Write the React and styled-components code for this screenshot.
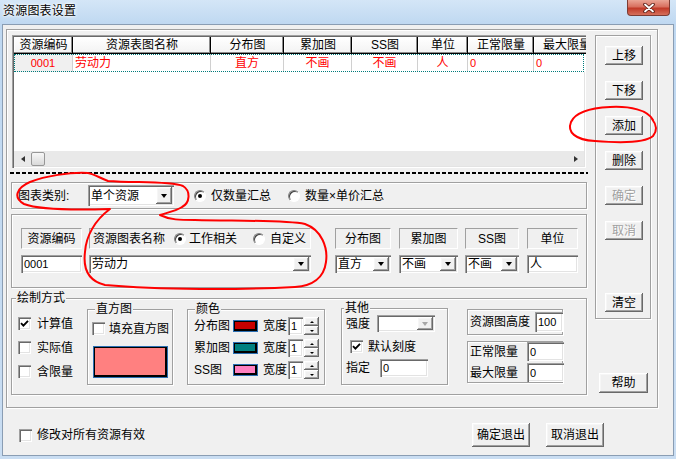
import React from 'react';
import styled, { createGlobalStyle, css } from 'styled-components';

const FONT = `"Liberation Sans", "Noto Sans CJK SC", sans-serif`;

const Global = createGlobalStyle`
  html, body { margin: 0; padding: 0; background: #fff; }
  body { font-family: ${FONT}; font-size: 12px; }
  * { box-sizing: border-box; }
`;

const raised = css`
  box-shadow: inset -1px -1px #696969, inset 1px 1px #fff, inset -2px -2px #a0a0a0, inset 2px 2px #f6f6f6;
`;
const sunken = css`
  box-shadow: inset 1px 1px #a0a0a0, inset 2px 2px #696969, inset -1px -1px #fff, inset -2px -2px #e3e3e3;
`;
const etched = css`
  border: 1px solid #a0a0a0;
  box-shadow: inset 1px 1px #fff, 1px 1px #fff;
`;

const Window = styled.div`
  position: relative;
  width: 676px;
  height: 459px;
  overflow: hidden;
  background: linear-gradient(180deg, #d4e6f7 0px, #bfd8f1 24px, #c9ddf2 100%);
  display: flex;
  flex-direction: column;
  font-family: ${FONT};
  font-size: 12px;
  line-height: 14px;
  color: #000;
`;

const TitleBar = styled.div`
  height: 24px;
  flex-shrink: 0;
  display: flex;
  align-items: flex-start;
  padding-left: 3px;
`;

const TitleText = styled.div`
  margin-top: 4px;
  letter-spacing: 0.2px;
  text-shadow: 0 0 5px #fff, 0 0 3px #fff, 0 0 2px #fff;
`;

const CloseBtn = styled.div`
  margin-left: auto;
  margin-right: 6px;
  width: 43px;
  height: 16px;
  border: 1px solid #7d3c33;
  border-top: none;
  border-radius: 0 0 4px 4px;
  background: linear-gradient(180deg, #eaa595 0%, #d8705f 45%, #c13a28 55%, #d5705c 100%);
  display: flex;
  align-items: center;
  justify-content: center;
`;

const Client = styled.div`
  flex: 1;
  margin: 0 2px 3px 2px;
  background: #f0f0f0;
  border: 1px solid #8a9db3;
  display: flex;
  flex-direction: column;
`;

const OuterFrame = styled.div`
  margin: 4px 0 0 3px;
  width: 652px;
  height: 379px;
  flex-shrink: 0;
  ${etched};
  display: flex;
  gap: 8px;
  padding: 5px 0 0 4px;
`;

const LeftCol = styled.div`
  width: 576px;
  display: flex;
  flex-direction: column;
`;

const RightCol = styled.div`
  width: 56px;
  display: flex;
  flex-direction: column;
`;

const ButtonPanel = styled.div`
  height: 284px;
  ${etched};
  display: flex;
  flex-direction: column;
  gap: 16px;
  padding: 10px 0 6px 9px;
`;

const Btn = styled.div`
  width: ${p => p.$w}px;
  height: ${p => p.$h}px;
  flex-shrink: 0;
  background: #f0f0f0;
  ${raised};
  display: flex;
  align-items: center;
  justify-content: center;
  color: ${p => (p.$disabled ? '#a0a0a0' : '#000')};
  text-shadow: ${p => (p.$disabled ? '1px 1px #fff' : 'none')};
  margin-top: ${p => (p.$push ? 'auto' : `${p.$mt || 0}px`)};
  margin-left: ${p => p.$ml || 0}px;
`;

/* ---------- list view ---------- */
const ListView = styled.div`
  margin-left: 1px;
  width: 574px;
  height: 133px;
  flex-shrink: 0;
  background: #fff;
  ${sunken};
  padding: 2px;
  display: flex;
  flex-direction: column;
  overflow: hidden;
`;

const HeaderRow = styled.div`
  display: flex;
  height: 17px;
  flex-shrink: 0;
`;

const HeaderCell = styled.div`
  width: ${p => p.$w}px;
  flex-shrink: 0;
  background: linear-gradient(180deg, #ffffff, #f2f2f2);
  box-shadow: inset -1px -1px #000, inset -2px -2px #8c8c8c, inset 1px 1px #fff;
  display: flex;
  align-items: center;
  justify-content: center;
  padding-bottom: 1px;
  white-space: nowrap;
  overflow: hidden;
`;

const DataRow = styled.div`
  display: flex;
  height: 18px;
  flex-shrink: 0;
  outline: 1px dotted #007b7b;
  outline-offset: -1px;
`;

const DataCell = styled.div`
  width: ${p => p.$w}px;
  flex-shrink: 0;
  border-right: 1px solid #d0d0d0;
  background: ${p => (p.$first ? '#f0f0f0' : '#fff')};
  color: #f00;
  display: flex;
  align-items: center;
  justify-content: ${p => (p.$align === 'left' ? 'flex-start' : 'center')};
  padding-left: ${p => (p.$align === 'left' ? 2 : 0)}px;
  font-size: ${p => (p.$num ? 11 : 12)}px;
  white-space: nowrap;
  overflow: hidden;
`;

const HScroll = styled.div`
  margin-top: auto;
  height: 15px;
  flex-shrink: 0;
  background: #e9e9e9;
  display: flex;
  align-items: center;
`;

const ScrollArrow = styled.div`
  width: 17px;
  height: 15px;
  display: flex;
  align-items: center;
  justify-content: center;
  margin-left: ${p => (p.$right ? 'auto' : '0')};
  &::after {
    content: '';
    border-top: 3.5px solid transparent;
    border-bottom: 3.5px solid transparent;
    ${p => (p.$right ? 'border-left: 4px solid #333;' : 'border-right: 4px solid #333;')}
  }
`;

const Thumb = styled.div`
  width: 14px;
  height: 14px;
  border: 1px solid #979797;
  border-radius: 2px;
  background: linear-gradient(180deg, #f7f7f7, #d9d9d9);
`;

const DashedLine = styled.div`
  margin: 4px 0 0 -1px;
  width: 578px;
  height: 2px;
  flex-shrink: 0;
  background: repeating-linear-gradient(90deg, #000 0 4px, transparent 4px 6px);
`;

/* ---------- form controls ---------- */
const ComboBox = styled.div`
  width: ${p => p.$w}px;
  height: ${p => p.$h || 18}px;
  flex-shrink: 0;
  background: #fff;
  ${sunken};
  display: flex;
  align-items: stretch;
  padding: 2px;
`;

const ComboText = styled.div`
  flex: 1;
  padding-left: 1px;
  display: flex;
  align-items: center;
  white-space: nowrap;
  overflow: hidden;
`;

const ComboArrow = styled.div`
  width: 16px;
  flex-shrink: 0;
  background: #f0f0f0;
  ${raised};
  display: flex;
  align-items: center;
  justify-content: center;
  &::after {
    content: '';
    border-left: 3.5px solid transparent;
    border-right: 3.5px solid transparent;
    border-top: 4px solid ${p => (p.$disabled ? '#a6a6a6' : '#000')};
  }
`;

const TextBox = styled.div`
  width: ${p => p.$w}px;
  height: ${p => p.$h || 18}px;
  flex-shrink: 0;
  background: #fff;
  ${sunken};
  padding: 0 2px 0 3px;
  display: flex;
  align-items: center;
  font-size: ${p => (p.$num ? 11 : 12)}px;
  white-space: nowrap;
  overflow: hidden;
`;

const CheckBox = styled.div`
  width: 13px;
  height: 13px;
  flex-shrink: 0;
  background: #fff;
  ${sunken};
  display: flex;
  align-items: center;
  justify-content: center;
  margin-left: ${p => p.$ml || 0}px;
`;

const CheckItem = styled.div`
  display: flex;
  align-items: center;
  gap: ${p => p.$gap || 6}px;
  margin-top: ${p => p.$mt || 0}px;
  margin-left: ${p => p.$ml || 0}px;
  height: 13px;
`;

const Radio = styled.div`
  width: 12px;
  height: 12px;
  flex-shrink: 0;
  border-radius: 50%;
  background: #fff;
  border: 1px solid;
  border-color: #808080 #ffffff #ffffff #808080;
  box-shadow: inset 1px 1px #404040;
  display: flex;
  align-items: center;
  justify-content: center;
  &::after {
    content: '';
    width: 4px;
    height: 4px;
    border-radius: 50%;
    background: ${p => (p.$on ? '#000' : 'transparent')};
  }
`;

const RadioOption = styled.div`
  display: flex;
  align-items: center;
  gap: ${p => p.$gap || 5}px;
  width: ${p => (p.$w ? `${p.$w}px` : 'auto')};
  flex-shrink: 0;
`;

const Label = styled.div`
  width: ${p => (p.$w ? `${p.$w}px` : 'auto')};
  flex-shrink: 0;
  white-space: nowrap;
`;

/* ---------- top bars ---------- */
const TypeBar = styled.div`
  margin-top: 8px;
  height: 27px;
  flex-shrink: 0;
  ${etched};
  display: flex;
  align-items: center;
  padding-left: 6px;
`;

const RadioGroup = styled.div`
  display: flex;
  align-items: center;
  margin-left: 20px;
`;

const ResourceBar = styled.div`
  margin-top: 5px;
  height: 74px;
  flex-shrink: 0;
  ${etched};
  display: flex;
  align-items: flex-start;
  padding: 13px 0 0 9px;
`;

const FieldCol = styled.div`
  width: ${p => p.$w}px;
  margin-left: ${p => p.$ml || 0}px;
  flex-shrink: 0;
  display: flex;
  flex-direction: column;
  gap: 6px;
`;

const StaticFrame = styled.div`
  height: 21px;
  border: 1px solid;
  border-color: #a0a0a0 #ffffff #ffffff #a0a0a0;
  display: flex;
  align-items: center;
  justify-content: ${p => (p.$left ? 'flex-start' : 'center')};
  padding-left: ${p => (p.$left ? 3 : 0)}px;
  white-space: nowrap;
`;

/* ---------- group boxes ---------- */
const Group = styled.div`
  width: ${p => (p.$w ? `${p.$w}px` : 'auto')};
  height: ${p => p.$h}px;
  margin-top: ${p => p.$mt || 0}px;
  margin-left: ${p => p.$ml || 0}px;
  flex-shrink: 0;
  ${etched};
  display: flex;
  flex-direction: column;
`;

const Caption = styled.div`
  margin: -8px 0 0 ${p => p.$ml}px;
  padding: 0 1px;
  height: 14px;
  line-height: 14px;
  background: #f0f0f0;
  align-self: flex-start;
  white-space: nowrap;
`;

const MainRow = styled.div`
  margin-top: 4px;
  padding-left: 6px;
  display: flex;
  align-items: flex-start;
`;

const CheckCol = styled.div`
  width: 69px;
  flex-shrink: 0;
  padding-top: 8px;
  display: flex;
  flex-direction: column;
  gap: 11px;
`;

const Swatch = styled.div`
  width: ${p => p.$w}px;
  height: ${p => p.$h}px;
  flex-shrink: 0;
  border: 1px solid #2b6fb3;
  background: ${p => p.$c};
  box-shadow: inset 1px 1px #000, inset -2px -2px #000;
  margin: ${p => p.$m || '0'};
`;

const ColorRows = styled.div`
  margin-top: 1px;
  display: flex;
  flex-direction: column;
  gap: 4px;
`;

const ColorRow = styled.div`
  display: flex;
  align-items: center;
  padding-left: 6px;
  height: 18px;
`;

const Spin = styled.div`
  width: 15px;
  height: 18px;
  margin-left: 1px;
  flex-shrink: 0;
  display: flex;
  flex-direction: column;
`;

const SpinHalf = styled.div`
  flex: 1;
  background: #f0f0f0;
  ${raised};
  display: flex;
  align-items: center;
  justify-content: center;
  &::after {
    content: '';
    border-left: 2px solid transparent;
    border-right: 2px solid transparent;
    ${p => (p.$up ? 'border-bottom: 2px solid #000;' : 'border-top: 2px solid #000;')}
  }
`;

const OtherRow = styled.div`
  display: flex;
  align-items: center;
  padding-left: 4px;
  margin-top: ${p => p.$mt || 0}px;
`;

const RightBoxes = styled.div`
  width: 96px;
  margin-left: 19px;
  display: flex;
  flex-direction: column;
  gap: 6px;
`;

const HeightBox = styled.div`
  height: 26px;
  ${etched};
  display: flex;
  align-items: center;
  padding-left: 2px;
`;

const LimitBox = styled.div`
  height: 42px;
  ${etched};
  display: flex;
  flex-direction: column;
  justify-content: center;
  gap: 2px;
  padding-left: 2px;
`;

const LimitRow = styled.div`
  display: flex;
  align-items: center;
`;

/* ---------- bottom ---------- */
const BottomRow = styled.div`
  margin-top: 15px;
  height: 24px;
  display: flex;
  align-items: center;
  padding-left: 16px;
  padding-right: 69px;
`;

const BottomButtons = styled.div`
  margin-left: auto;
  display: flex;
  gap: 16px;
`;

const Annotations = styled.svg`
  position: absolute;
  left: 0;
  top: 0;
  pointer-events: none;
`;

const Check = () => (
  <svg width="9" height="9" viewBox="0 0 9 9">
    <path d="M1 4.2 L3.4 6.6 L8 1.8" fill="none" stroke="#000" strokeWidth="1.9" />
  </svg>
);

const cols = [
  { w: 59, title: '资源编码', v: '0001', align: 'center', num: true },
  { w: 138, title: '资源表图名称', v: '劳动力', align: 'left' },
  { w: 73, title: '分布图', v: '直方', align: 'center' },
  { w: 68, title: '累加图', v: '不画', align: 'center' },
  { w: 66, title: 'SS图', v: '不画', align: 'center' },
  { w: 50, title: '单位', v: '人', align: 'center' },
  { w: 66, title: '正常限量', v: '0', align: 'left', num: true },
  { w: 66, title: '最大限量', v: '0', align: 'left', num: true },
];

const colorRows = [
  { name: '分布图', c: '#c80000' },
  { name: '累加图', c: '#008080' },
  { name: 'SS图', c: '#ff80c0' },
];

export default function App() {
  return (
    <>
      <Global />
      <Window>
        <TitleBar>
          <TitleText>资源图表设置</TitleText>
          <CloseBtn>
            <svg width="12" height="10" viewBox="0 0 12 10">
              <path d="M2 1.5 L10 8.5 M10 1.5 L2 8.5" stroke="#5a1d14" strokeWidth="3.6" strokeLinecap="round" />
              <path d="M2 1.5 L10 8.5 M10 1.5 L2 8.5" stroke="#fff" strokeWidth="1.8" strokeLinecap="round" />
            </svg>
          </CloseBtn>
        </TitleBar>
        <Client>
          <OuterFrame>
            <LeftCol>
              <ListView>
                <HeaderRow>
                  {cols.map(c => (
                    <HeaderCell key={c.title} $w={c.w}>{c.title}</HeaderCell>
                  ))}
                </HeaderRow>
                <DataRow>
                  {cols.map((c, i) => (
                    <DataCell key={c.title} $w={c.w} $align={c.align} $first={i === 0} $num={c.num}>
                      {c.v}
                    </DataCell>
                  ))}
                </DataRow>
                <HScroll>
                  <ScrollArrow />
                  <Thumb />
                  <ScrollArrow $right />
                </HScroll>
              </ListView>
              <DashedLine />
              <TypeBar>
                <Label $w={70}>图表类别:</Label>
                <ComboBox $w={86} $h={21}>
                  <ComboText>单个资源</ComboText>
                  <ComboArrow />
                </ComboBox>
                <RadioGroup>
                  <RadioOption $w={94}>
                    <Radio $on />
                    <span>仅数量汇总</span>
                  </RadioOption>
                  <RadioOption>
                    <Radio />
                    <span>数量×单价汇总</span>
                  </RadioOption>
                </RadioGroup>
              </TypeBar>
              <ResourceBar>
                <FieldCol $w={61}>
                  <StaticFrame>资源编码</StaticFrame>
                  <TextBox $w={61} $num>0001</TextBox>
                </FieldCol>
                <FieldCol $w={222} $ml={7}>
                  <StaticFrame $left>
                    <Label $w={81}>资源图表名称</Label>
                    <RadioOption $w={79} $gap={3}>
                      <Radio $on />
                      <span>工作相关</span>
                    </RadioOption>
                    <RadioOption $gap={5}>
                      <Radio />
                      <span>自定义</span>
                    </RadioOption>
                  </StaticFrame>
                  <ComboBox $w={222}>
                    <ComboText>劳动力</ComboText>
                    <ComboArrow />
                  </ComboBox>
                </FieldCol>
                <FieldCol $w={56} $ml={24}>
                  <StaticFrame>分布图</StaticFrame>
                  <ComboBox $w={56}>
                    <ComboText>直方</ComboText>
                    <ComboArrow />
                  </ComboBox>
                </FieldCol>
                <FieldCol $w={59} $ml={8}>
                  <StaticFrame>累加图</StaticFrame>
                  <ComboBox $w={59}>
                    <ComboText>不画</ComboText>
                    <ComboArrow />
                  </ComboBox>
                </FieldCol>
                <FieldCol $w={54} $ml={7}>
                  <StaticFrame>SS图</StaticFrame>
                  <ComboBox $w={54}>
                    <ComboText>不画</ComboText>
                    <ComboArrow />
                  </ComboBox>
                </FieldCol>
                <FieldCol $w={51} $ml={8}>
                  <StaticFrame>单位</StaticFrame>
                  <TextBox $w={51}>人</TextBox>
                </FieldCol>
              </ResourceBar>
              <Group $h={97} $mt={10}>
                <Caption $ml={4}>绘制方式</Caption>
                <MainRow>
                  <CheckCol>
                    <CheckItem>
                      <CheckBox><Check /></CheckBox>
                      <span>计算值</span>
                    </CheckItem>
                    <CheckItem>
                      <CheckBox />
                      <span>实际值</span>
                    </CheckItem>
                    <CheckItem>
                      <CheckBox />
                      <span>含限量</span>
                    </CheckItem>
                  </CheckCol>
                  <Group $w={86} $h={76}>
                    <Caption $ml={7}>直方图</Caption>
                    <CheckItem $mt={6} $ml={4} $gap={4}>
                      <CheckBox />
                      <span>填充直方图</span>
                    </CheckItem>
                    <Swatch $w={75} $h={32} $c="#ff8080" $m="11px 0 0 5px" />
                  </Group>
                  <Group $w={138} $h={76} $ml={14}>
                    <Caption $ml={7}>颜色</Caption>
                    <ColorRows>
                      {colorRows.map(r => (
                        <ColorRow key={r.name}>
                          <Label $w={39}>{r.name}</Label>
                          <Swatch $w={25} $h={12} $c={r.c} />
                          <Label $w={25} style={{ marginLeft: 5 }}>宽度</Label>
                          <TextBox $w={15} $num>1</TextBox>
                          <Spin>
                            <SpinHalf $up />
                            <SpinHalf />
                          </Spin>
                        </ColorRow>
                      ))}
                    </ColorRows>
                  </Group>
                  <Group $w={107} $h={77} $ml={16} $mt={-1}>
                    <Caption $ml={2}>其他</Caption>
                    <OtherRow>
                      <Label $w={31}>强度</Label>
                      <ComboBox $w={58} $h={17}>
                        <ComboText />
                        <ComboArrow $disabled />
                      </ComboBox>
                    </OtherRow>
                    <CheckItem $mt={8} $ml={8} $gap={5}>
                      <CheckBox><Check /></CheckBox>
                      <span>默认刻度</span>
                    </CheckItem>
                    <OtherRow $mt={6}>
                      <Label $w={34}>指定</Label>
                      <TextBox $w={48} $num>0</TextBox>
                    </OtherRow>
                  </Group>
                  <RightBoxes>
                    <HeightBox>
                      <Label $w={65}>资源图高度</Label>
                      <TextBox $w={28} $h={20} $num>100</TextBox>
                    </HeightBox>
                    <LimitBox>
                      <LimitRow>
                        <Label $w={57}>正常限量</Label>
                        <TextBox $w={37} $h={19} $num>0</TextBox>
                      </LimitRow>
                      <LimitRow>
                        <Label $w={57}>最大限量</Label>
                        <TextBox $w={37} $h={19} $num>0</TextBox>
                      </LimitRow>
                    </LimitBox>
                  </RightBoxes>
                </MainRow>
              </Group>
            </LeftCol>
            <RightCol>
              <ButtonPanel>
                <Btn $w={38} $h={19}>上移</Btn>
                <Btn $w={38} $h={19}>下移</Btn>
                <Btn $w={38} $h={19}>添加</Btn>
                <Btn $w={38} $h={19}>删除</Btn>
                <Btn $w={38} $h={19} $disabled>确定</Btn>
                <Btn $w={38} $h={19} $disabled>取消</Btn>
                <Btn $w={38} $h={19} $push>清空</Btn>
              </ButtonPanel>
              <Btn $w={49} $h={20} $mt={54} $ml={4}>帮助</Btn>
            </RightCol>
          </OuterFrame>
          <BottomRow>
            <CheckItem $gap={5}>
              <CheckBox />
              <span>修改对所有资源有效</span>
            </CheckItem>
            <BottomButtons>
              <Btn $w={58} $h={24}>确定退出</Btn>
              <Btn $w={58} $h={24}>取消退出</Btn>
            </BottomButtons>
          </BottomRow>
        </Client>
        <Annotations width="676" height="459" viewBox="0 0 676 459">
          <path
            d="M653 120 C648 110 630 106 610 107 C590 108 575 113 571 122 C567 132 575 140 595 141 C620 143 645 143 653 136 C658 130 656 124 652 119"
            fill="none" stroke="#f00" strokeWidth="2" strokeLinecap="round"
          />
          <path
            d="M160 215 C170 220 180 220 195 220 C240 221 285 220 305 224 C322 230 328 248 326 262 C324 278 312 286 295 287 C240 290 160 290 105 285 C88 281 83 268 85 252 C86 236 95 220 110 209 C80 210 40 210 24 204 C13 198 16 188 30 182 C45 176 70 172 88 173 C94 174 100 178 108 181 C135 183 170 181 183 186 C191 191 190 203 182 207 C176 211 166 213 160 215"
            fill="none" stroke="#f00" strokeWidth="2" strokeLinecap="round" strokeLinejoin="round"
          />
        </Annotations>
      </Window>
    </>
  );
}
